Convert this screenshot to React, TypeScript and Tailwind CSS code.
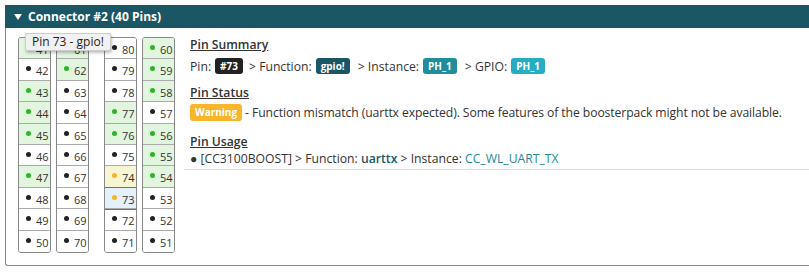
type Pin = { n: number; bg?: 'green' | 'yellow' | 'blue'; dot?: 'green' | 'orange' | 'dark' }

const g = (n: number): Pin => ({ n, bg: 'green', dot: 'green' })
const w = (n: number): Pin => ({ n })

const columns: Pin[][] = [
  [g(41), w(42), g(43), g(44), g(45), w(46), g(47), w(48), w(49), w(50)],
  [g(61), g(62), w(63), w(64), w(65), w(66), w(67), w(68), w(69), w(70)],
  [w(80), w(79), w(78), g(77), g(76), w(75), { n: 74, bg: 'yellow', dot: 'orange' }, { n: 73, bg: 'blue', dot: 'orange' }, w(72), w(71)],
  [g(60), g(59), g(58), w(57), g(56), g(55), g(54), w(53), w(52), w(51)],
]

function PinCell({ pin, last }: { pin: Pin; last: boolean }) {
  const bg =
    pin.bg === 'green' ? 'bg-[#e2f5df]' : pin.bg === 'yellow' ? 'bg-[#f7f5d2]' : pin.bg === 'blue' ? 'bg-[#e4f0fa]' : 'bg-white'
  const dot = pin.dot === 'green' ? 'bg-[#2db52a]' : pin.dot === 'orange' ? 'bg-[#f7b52b]' : 'bg-[#222]'
  const border = pin.bg === 'blue' ? 'outline outline-1 outline-[#2a8aa0] relative z-[1]' : ''
  return (
    <div className={`h-[21.4px] flex items-start pl-[7px] ${bg} ${border} ${last ? '' : 'border-b border-[#aaa]'}`}>
      <span className={`w-[5px] h-[5px] rounded-full mt-[7px] ${dot}`} />
      <span className="ml-[5px] mt-[5px] text-[11px] leading-[14px] text-[#333]">{pin.n}</span>
    </div>
  )
}

function PinColumn({ pins }: { pins: Pin[] }) {
  return (
    <div className="w-[33px] border border-[#888] rounded-[3px] overflow-hidden">
      {pins.map((p, i) => (
        <PinCell key={p.n} pin={p} last={i === pins.length - 1} />
      ))}
    </div>
  )
}

function Badge({ children, color }: { children: React.ReactNode; color: string }) {
  return (
    <span className={`inline-block rounded-[3px] px-[5px] text-[10px] leading-[16px] font-bold text-white ${color}`}>
      {children}
    </span>
  )
}

export default function App() {
  return (
    <div className="pt-[5px] pl-[5px] bg-white w-[809px] h-[275px] overflow-hidden" style={{ fontFamily: '"Open Sans", sans-serif' }}>
      <div className="h-[23px] bg-[#1b5665] flex items-center pl-[9px] text-white text-[12px] font-bold">
        <svg width="8" height="6" viewBox="0 0 8 6" className="mr-[6px]">
          <path d="M0 0h8L4 6z" fill="#fff" />
        </svg>
        Connector #2 (40 Pins)
      </div>
      <div className="relative flex h-[238px] border-l border-b border-[#888] rounded-bl-[3px]">
        <div className="flex items-start pl-[12px] pt-[9px]">
          <PinColumn pins={columns[0]} />
          <div className="w-[5px]" />
          <PinColumn pins={columns[1]} />
          <div className="w-[15px]" />
          <PinColumn pins={columns[2]} />
          <div className="w-[5px]" />
          <PinColumn pins={columns[3]} />
        </div>
        <div className="absolute left-[19px] top-[5px] px-[6px] h-[18px] flex items-center bg-[#f1f1f1] border border-[#ccc] rounded-[2px] shadow-[1px_2px_3px_rgba(0,0,0,0.25)] text-[12px] text-[#222]">
          Pin 73 - gpio!
        </div>
        <div className="ml-[9px] flex-1 self-start border-b border-[#ddd] pt-[8px] pb-[2.5px] pl-[6px] text-[12.2px] leading-[17px] text-[#333]">
          <div className="font-semibold underline">Pin Summary</div>
          <div className="flex items-center gap-[4px] mt-[3px] h-[20px]">
            <span>Pin:</span>
            <Badge color="bg-[#222]">#73</Badge>
            <span className="ml-[2px]">&gt; Function:</span>
            <Badge color="bg-[#1b5665]">gpio!</Badge>
            <span className="ml-[4px]">&gt; Instance:</span>
            <Badge color="bg-[#218c9c]">PH_1</Badge>
            <span className="ml-[4px]">&gt; GPIO:</span>
            <Badge color="bg-[#27adc3]">PH_1</Badge>
          </div>
          <div className="font-semibold underline mt-[7.5px]">Pin Status</div>
          <div className="flex items-center mt-[1.5px] h-[20px]">
            <span className="inline-block rounded-[3px] px-[5px] text-[10px] leading-[17px] font-bold text-white bg-[#f9b52c]">Warning</span>
            <span className="ml-[3px] whitespace-nowrap tracking-[-0.1px]">- Function mismatch (uarttx expected). Some features of the boosterpack might not be available.</span>
          </div>
          <div className="font-semibold underline mt-[10.5px]">Pin Usage</div>
          <div>
            ● [CC3100BOOST] &gt; Function: <span className="text-[#1b5665] font-semibold">uarttx</span> &gt; Instance:{' '}
            <span className="text-[#1f8a9a]">CC_WL_UART_TX</span>
          </div>
        </div>
      </div>
    </div>
  )
}
